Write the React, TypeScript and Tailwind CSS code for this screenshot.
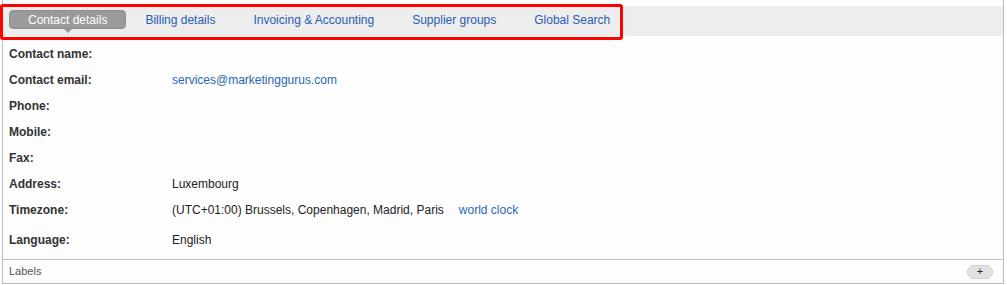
import React from 'react';

const tabs = ['Contact details', 'Billing details', 'Invoicing & Accounting', 'Supplier groups', 'Global Search'];

const rows: { label: string; value?: string; link?: boolean }[] = [
  { label: 'Contact name:' },
  { label: 'Contact email:', value: 'services@marketinggurus.com', link: true },
  { label: 'Phone:' },
  { label: 'Mobile:' },
  { label: 'Fax:' },
  { label: 'Address:', value: 'Luxembourg' },
];

function Row({ label, children }: { label: string; children?: React.ReactNode }) {
  return (
    <div className="flex h-[26px] items-center">
      <div className="w-[163px] shrink-0 font-bold text-[#333]">{label}</div>
      <div className="flex items-center">{children}</div>
    </div>
  );
}

export default function App() {
  return (
    <div
      className="relative h-[285px] w-[1007px] bg-[#fdfdfd] text-[12px]"
      style={{ fontFamily: '"Liberation Sans", Arial, sans-serif' }}
    >
      <div className="ml-[2px] flex h-[284px] w-[1002px] flex-col border-x border-b border-[#bdbdbd]">
        {/* tab bar */}
        <div className="mt-[6px] flex h-[30px] items-start bg-[#ededed] pl-[6px] pt-[4px]">
          {tabs.map((t, i) =>
            i === 0 ? (
              <div key={t} className="relative flex h-[19px] items-center rounded-[4px] border border-[#8e8e8e] bg-[#9a9a9a] px-[18px] text-white">
                {t}
                <span className="absolute left-1/2 top-[18px] -ml-[4px] h-0 w-0 border-x-[4px] border-t-[4px] border-x-transparent border-t-[#9a9a9a]" />
              </div>
            ) : (
              <div key={t} className="flex h-[19px] items-center px-[19px] text-[#2a5cb3]">
                {t}
              </div>
            )
          )}
        </div>

        {/* details */}
        <div className="flex flex-col pl-[6px] pt-[5px]">
          {rows.map((r) => (
            <Row key={r.label} label={r.label}>
              {r.value && <span className={r.link ? 'text-[#2867b2]' : 'text-[#222]'}>{r.value}</span>}
            </Row>
          ))}
          <Row label="Timezone:">
            <span className="text-[#222]">(UTC+01:00) Brussels, Copenhagen, Madrid, Paris</span>
            <span className="ml-[15px] text-[#2867b2]">world clock</span>
          </Row>
          <div className="mt-[4px]">
            <Row label="Language:">
              <span className="text-[#222]">English</span>
            </Row>
          </div>
        </div>

        {/* labels */}
        <div className="mt-[6px] flex flex-1 items-center justify-between border-t border-[#bdbdbd] pl-[6px] pr-[10px]">
          <span className="text-[11px] text-[#555]">Labels</span>
          <button className="flex h-[14px] w-[26px] items-center justify-center rounded-full border border-[#cfcfcf] bg-[#e2e2e2] text-[11px] leading-none text-[#222]">
            +
          </button>
        </div>
      </div>

      {/* annotation outline */}
      <div className="pointer-events-none absolute left-0 top-[4px] h-[36px] w-[623px] rounded-[3px] border-[3px] border-[#ff0000]" />
    </div>
  );
}
